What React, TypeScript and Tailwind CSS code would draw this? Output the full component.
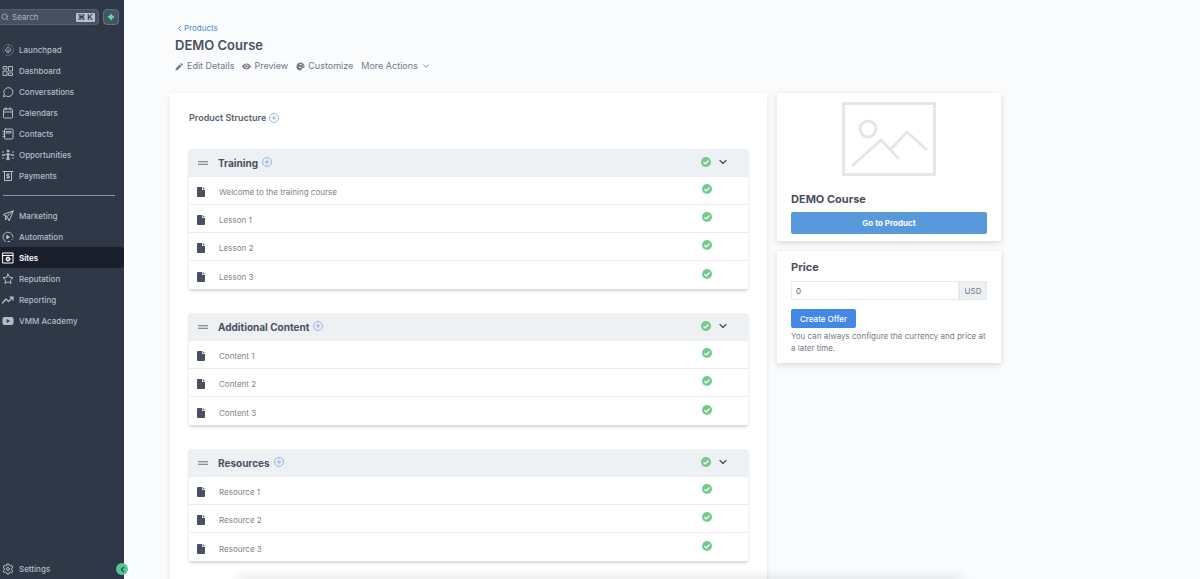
import { useState } from "react";
import type { ReactNode } from "react";
import { ChevronDown, ChevronLeft, Search } from "lucide-react";

const iconBase = {
  width: 12,
  height: 12,
  viewBox: "0 0 24 24",
  fill: "none",
  stroke: "currentColor",
  strokeWidth: 2,
  strokeLinecap: "round" as const,
  strokeLinejoin: "round" as const,
  "aria-hidden": true,
};

type NavItem = { label: string; icon: ReactNode };

const primaryNav: NavItem[] = [
  {
    label: "Launchpad",
    icon: (
      <svg {...iconBase} strokeWidth={1.5}>
        <path d="M12 1a11 11 0 0 0-9 17" opacity=".3" />
        <path d="M12 1a11 11 0 0 1 9 5" stroke="#b7794f" />
        <path d="M22.500 9a11 11 0 0 1-15 13" opacity=".5" />
        <path d="M12 6l-5 5v3h3v3h4v-3h3v-3z M12 10v4" />
      </svg>
    ),
  },
  {
    label: "Dashboard",
    icon: (
      <svg {...iconBase}>
        <path d="M3 3h7v5H3z M14 3h7v9h-7z M3 12h7v9H3z M14 16h7v5h-7z" />
      </svg>
    ),
  },
  {
    label: "Conversations",
    icon: (
      <svg {...iconBase}>
        <path d="M3 21l1.500-5A9 9 0 1 1 8 20z" />
      </svg>
    ),
  },
  {
    label: "Calendars",
    icon: (
      <svg {...iconBase}>
        <rect x="3" y="4" width="18" height="18" rx="2" />
        <path d="M3 10h18M8 1v5M16 1v5" />
      </svg>
    ),
  },
  {
    label: "Contacts",
    icon: (
      <svg {...iconBase}>
        <rect x="5" y="2" width="17" height="20" rx="2" />
        <path d="M9 7h9v3H9z M2 7h4M2 12h4M2 17h4" />
      </svg>
    ),
  },
  {
    label: "Opportunities",
    icon: (
      <svg {...iconBase}>
        <circle cx="12" cy="4" r="2" fill="currentColor" />
        <path d="M8 11h8M12 9v6M12 14l-2 7M12 14l2 7" strokeWidth="3" />
        <path d="M2 6h.1M22 6h-.1M2 18h.1M22 18h-.1M1 12h4M19 12h4" strokeWidth="3" />
      </svg>
    ),
  },
  {
    label: "Payments",
    icon: (
      <svg {...iconBase}>
        <path d="M2 3h20M5 3v18h14V3" />
        <path d="M14.500 8.500h-4a1.500 1.500 0 0 0 0 3.500h3a1.500 1.500 0 0 1 0 3.500h-4M12 7v10" />
      </svg>
    ),
  },
];

const secondaryNav: NavItem[] = [
  {
    label: "Marketing",
    icon: (
      <svg {...iconBase}>
        <path d="M22 2L2 9l8 4 4 8z M22 2L10 13M7 12v8l4-4" />
      </svg>
    ),
  },
  {
    label: "Automation",
    icon: (
      <svg {...iconBase}>
        <path d="M7 21A10 10 0 1 1 22 12" />
        <path d="M10 9l5 3-5 3z" fill="currentColor" />
        <path d="M21 16l-1 1M15 21h-3" />
      </svg>
    ),
  },
  {
    label: "Sites",
    icon: (
      <svg {...iconBase}>
        <rect x="2" y="2" width="20" height="20" />
        <path d="M2 7h20" />
        <circle cx="12" cy="14" r="4" fill="currentColor" />
        <path d="M10.500 14h3" stroke="#171c29" />
      </svg>
    ),
  },
  {
    label: "Reputation",
    icon: (
      <svg {...iconBase}>
        <path d="M12 2l3 6.500 7 .8-5.100 4.800 1.300 7L12 17.700 5.800 21l1.300-7L2 9.300l7-.8z" />
      </svg>
    ),
  },
  {
    label: "Reporting",
    icon: (
      <svg {...iconBase} strokeWidth={2.5}>
        <path d="M1 18l7-8 5 5 9-9M16 6h6v6" />
      </svg>
    ),
  },
  {
    label: "VMM Academy",
    icon: (
      <svg {...iconBase} stroke="none">
        <rect x="1" y="4" width="22" height="16" rx="4" fill="currentColor" />
        <path d="M9.500 8v8l6.500-4z" fill="#2f3847" />
      </svg>
    ),
  },
];

const modules = [
  {
    title: "Training",
    lessons: ["Welcome to the training course", "Lesson 1", "Lesson 2", "Lesson 3"],
  },
  { title: "Additional Content", lessons: ["Content 1", "Content 2", "Content 3"] },
  { title: "Resources", lessons: ["Resource 1", "Resource 2", "Resource 3"] },
];

function CheckBadge() {
  return (
    <svg width="10" height="10" viewBox="0 0 20 20" role="img" aria-label="Published">
      <circle cx="10" cy="10" r="10" fill="#75ca8f" />
      <path d="M5 10.500l3.500 3.500 6.500-7" fill="none" stroke="#fff" strokeWidth="2.400" />
    </svg>
  );
}

function AddButton({ label }: { label: string }) {
  return (
    <button type="button" aria-label={label} className="text-[#8ba6dc]">
      <svg width="10" height="10" viewBox="0 0 20 20" fill="none" stroke="currentColor" strokeWidth="1.700">
        <circle cx="10" cy="10" r="9" />
        <path d="M10 5v10M5 10h10" />
      </svg>
    </button>
  );
}

function FileIcon() {
  return (
    <svg width="8" height="10" viewBox="0 0 16 20" fill="#4a5062" aria-hidden>
      <path d="M2 0h8v6h6v12a2 2 0 0 1-2 2H2a2 2 0 0 1-2-2V2a2 2 0 0 1 2-2z" />
      <path d="M11.500 0L16 4.500h-4.500z" />
    </svg>
  );
}

function NavLink({ item, active }: { item: NavItem; active?: boolean }) {
  return (
    <a
      href="#"
      className={
        active
          ? "flex h-[21px] items-center gap-1 rounded-r-sm bg-[#191e2b] pl-0.5 text-[8px] font-semibold text-white"
          : "flex h-[21px] items-center gap-1 pl-0.5 text-[8px] font-medium text-[#b4bcc9]"
      }
    >
      {item.icon}
      <span className="pl-px">{item.label}</span>
    </a>
  );
}

function Sidebar() {
  return (
    <aside className="relative flex w-31 shrink-0 flex-col bg-[#2f3847] pt-[9px]">
      <div className="flex items-center gap-1 pr-[5px]">
        <label className="flex h-4 min-w-0 flex-1 items-center gap-[3px] rounded-r-sm border border-l-0 border-[#565f6e] bg-[#475062] pr-[3px] pl-px text-[#a9b1bf]">
          <Search size={8} strokeWidth={2.5} className="shrink-0" />
          <input
            type="search"
            aria-label="Search"
            placeholder="Search"
            className="min-w-0 flex-1 bg-transparent text-[8px] outline-none placeholder:text-[#a9b1bf]"
          />
          <kbd className="flex h-[9px] items-center rounded-[1px] bg-[#b9c0cb] px-0.5 font-[Inter,'DejaVu_Sans',sans-serif] text-[8px] font-semibold text-[#2f3847]">
            ⌘ K
          </kbd>
        </label>
        <button
          type="button"
          aria-label="Quick actions"
          className="flex size-4 items-center justify-center rounded-sm border border-[#647080] bg-[#475364] text-[#5fdc9b]"
        >
          <svg width="8" height="8" viewBox="0 0 16 16" fill="currentColor">
            <path d="M8 1l3 4 4 3-4 3-3 4-3-4-4-3 4-3z" />
          </svg>
        </button>
      </div>
      <nav className="mt-3.5 flex flex-1 flex-col">
        {primaryNav.map((item) => (
          <NavLink key={item.label} item={item} />
        ))}
        <hr className="mt-[9px] mr-[9px] mb-[9px] ml-[3px] border-[#8b95a5]" />
        {secondaryNav.map((item) => (
          <NavLink key={item.label} item={item} active={item.label === "Sites"} />
        ))}
        <div className="mt-auto">
          <NavLink
            item={{
              label: "Settings",
              icon: (
                <svg {...iconBase}>
                  <path d="M10 2h4l.7 3 2.300 1 2.600-1.600 2 3.400L19.500 10v4l2.100 2.200-2 3.400L17 18l-2.300 1-.7 3h-4l-.7-3L7 18l-2.600 1.600-2-3.400L4.500 14v-4L2.400 7.800l2-3.400L7 6l2.300-1z" />
                  <circle cx="12" cy="12" r="3" />
                </svg>
              ),
            }}
          />
        </div>
      </nav>
      <button
        type="button"
        aria-label="Collapse sidebar"
        className="absolute -right-1 bottom-1 flex size-3 items-center justify-center rounded-full bg-[#56c596] text-[#1f4a42]"
      >
        <ChevronLeft size={9} strokeWidth={3} />
      </button>
    </aside>
  );
}

function ModuleCard({ title, lessons }: { title: string; lessons: string[] }) {
  const [open, setOpen] = useState(true);

  return (
    <section className="rounded-xs bg-white shadow-[0_2px_3px_rgba(0,0,0,0.17)]">
      <header className="flex h-7 items-center rounded-t-xs bg-[#edf1f4] pr-[19px] pl-[9px]">
        <span className="flex w-5" aria-hidden>
          <span className="h-1 w-2.5 border-y border-[#8a919e] bg-[#cdd2d9]" />
        </span>
        <h3 className="text-[10px] font-bold text-[#4a505e]">{title}</h3>
        <div className="flex flex-1 pb-0.5 pl-1">
          <AddButton label={`Add to ${title}`} />
        </div>
        <div className="flex items-center gap-1.5 pb-0.5">
          <CheckBadge />
          <button type="button" aria-label={`Toggle ${title}`} aria-expanded={open} onClick={() => setOpen(!open)}>
            <ChevronDown size={12} strokeWidth={2.5} className="text-[#4a5062]" />
          </button>
        </div>
      </header>
      {open && (
        <ul className="divide-y divide-[#eaecef]">
          {lessons.map((lesson) => (
            <li key={lesson} className="flex h-7 items-center pt-[3px] pr-9 pl-2">
              <FileIcon />
              <span className="flex-1 pl-3.5 text-[8px] text-[#7d828b]">{lesson}</span>
              <span className="pb-1.5">
                <CheckBadge />
              </span>
            </li>
          ))}
        </ul>
      )}
    </section>
  );
}

function PageHeader() {
  return (
    <header className="pl-[5px] text-[#747a86]">
      <a href="#" className="flex h-3 items-center text-[8px] text-[#4b8bd8]">
        <ChevronLeft size={9} strokeWidth={2.5} />
        Products
      </a>
      <h1 className="mt-px text-[13px] leading-5 font-semibold text-[#4a505e]">DEMO Course</h1>
      <div className="mt-px flex h-5 items-center gap-2 text-[9px]">
        <a href="#" className="flex items-center gap-[3px]">
          <svg width="9" height="9" viewBox="0 0 20 20" fill="currentColor">
            <path d="M14 2l4 4-2.500 2.500-4-4z M10.300 5.700l4 4L6 18l-5 1 1-5z" />
          </svg>
          Edit Details
        </a>
        <a href="#" className="flex items-center gap-[3px]">
          <svg width="9" height="9" viewBox="0 0 20 20">
            <path d="M0 10c5-9 15-9 20 0-5 9-15 9-20 0z" fill="currentColor" />
            <circle cx="10" cy="10" r="3.500" fill="none" stroke="#f9fbfd" strokeWidth="2" />
          </svg>
          Preview
        </a>
        <a href="#" className="flex items-center gap-[3px]">
          <svg width="9" height="9" viewBox="0 0 20 20">
            <path d="M10 1C4 1 1 6 1 10c0 6 4 9 9 9 3 0 2-4 4-5 2-1 5 0 5-4 0-5-4-9-9-9z" fill="currentColor" />
            <path d="M8 6h5M15 9h2M7 12h5" stroke="#f9fbfd" strokeWidth="2" />
          </svg>
          Customize
        </a>
        <button type="button" className="flex items-center gap-[3px]">
          More Actions
          <ChevronDown size={10} strokeWidth={2} />
        </button>
      </div>
    </header>
  );
}

function ProductCard() {
  return (
    <section className="bg-white px-3.5 pt-[9px] pb-[7px] shadow-[0_2px_6px_rgba(0,0,0,0.14)]">
      <svg
        width="94"
        height="74"
        viewBox="0 0 94 74"
        fill="none"
        stroke="#e4e7e8"
        strokeWidth="3"
        className="mx-auto"
        role="img"
        aria-label="Product thumbnail"
      >
        <rect x="1.500" y="1.500" width="91" height="71" />
        <circle cx="26" cy="27" r="8" />
        <path d="M10 64l29-26 18 19M49 47l16-17 20 18" />
      </svg>
      <h2 className="mt-3.5 text-[11px] leading-[18px] font-bold text-[#4a505e]">DEMO Course</h2>
      <button type="button" className="mt-1 h-[22px] w-full rounded-xs bg-[#5899dc] text-[8px] font-bold text-white">
        Go to Product
      </button>
    </section>
  );
}

function PriceCard() {
  return (
    <section className="bg-white px-3.5 pt-[7px] pb-[9px] text-[#747a86] shadow-[0_2px_6px_rgba(0,0,0,0.14)]">
      <label htmlFor="price" className="block text-[11px] leading-[18px] font-bold text-[#4a505e]">
        Price
      </label>
      <div className="mt-[5px] flex h-[19px]">
        <input
          id="price"
          defaultValue="0"
          className="min-w-0 flex-1 border border-[#e9ecef] px-1 pt-px text-[8px] text-[#555c69] outline-none"
        />
        <span className="flex w-7 items-center justify-center border border-[#e4e8ed] bg-[#edf1f4] text-[8px]">USD</span>
      </div>
      <button type="button" className="mt-[9px] block h-[19px] rounded-xs bg-[#4488e6] px-[9px] text-[8px] font-medium text-white">
        Create Offer
      </button>
      <p className="mt-0.5 text-[8px] leading-3">
        You can always configure the currency and price at a later time.
      </p>
    </section>
  );
}

export default function App() {
  return (
    <div className="relative flex h-screen overflow-hidden bg-[#f9fbfd] font-[Inter,sans-serif]">
      <Sidebar />
      <main className="min-w-0 flex-1 overflow-hidden pt-[22px] pr-[199px] pl-[46px]">
        <PageHeader />
        <div className="mt-[17px] flex items-start gap-2.5">
          <div className="min-w-0 flex-1 bg-white px-[19px] pt-[17px] pb-10 shadow-[0_2px_6px_rgba(0,0,0,0.08)]">
            <div className="flex h-4 items-center gap-[3px]">
              <h2 className="text-[9px] font-semibold text-[#5a606d]">Product Structure</h2>
              <AddButton label="Add module" />
            </div>
            <div className="mt-[23px] flex flex-col gap-6">
              {modules.map((m) => (
                <ModuleCard key={m.title} title={m.title} lessons={m.lessons} />
              ))}
            </div>
          </div>
          <aside className="flex w-56 shrink-0 flex-col gap-2.5">
            <ProductCard />
            <PriceCard />
          </aside>
        </div>
      </main>
      <div className="pointer-events-none absolute inset-x-60 -bottom-1 h-1 shadow-[0_0_12px_1px_rgba(0,0,0,0.16)]" />
    </div>
  );
}
